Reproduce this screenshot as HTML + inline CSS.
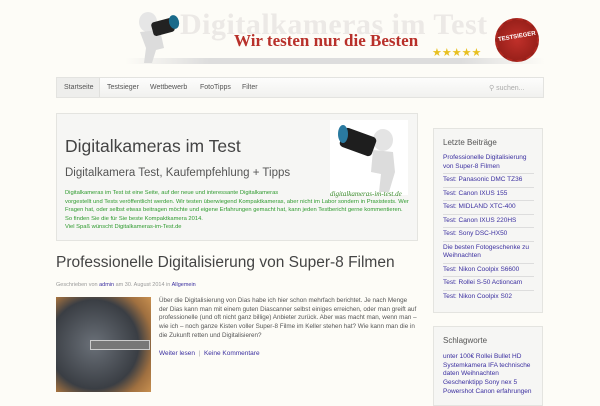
<!DOCTYPE html>
<html><head><meta charset="utf-8"><style>
*{margin:0;padding:0;box-sizing:border-box}
body{width:600px;height:400px;overflow:hidden;background:#fdfcf7;font-family:"Liberation Sans","DejaVu Sans",sans-serif;position:relative}
.a{position:absolute}
a{color:#3b2fa0;text-decoration:none}
.nav{left:56px;top:77px;width:488px;height:21px;background:linear-gradient(#fdfdfc,#f1f1ef);border:1px solid #e3e3e0;font-size:7px;color:#555}
.nav span{position:absolute;top:6px}
.box{background:#f6f6f4;border:1px solid #e4e4e0}
.side a{display:block;font-size:6.5px;line-height:8.5px;padding:2px 0;border-bottom:1px solid #ddd}
</style></head><body>
<!-- header -->
<div class="a" style="left:125px;top:58px;width:420px;height:6px;background:linear-gradient(90deg,#fdfcf7,#ddd 20%,#ddd 80%,#fdfcf7)"></div>
<svg class="a" style="left:130px;top:8px" width="60" height="56"><ellipse cx="18" cy="14" rx="9" ry="10" fill="#e6e6e6"/><path d="M10 24 L30 22 L34 40 L26 42 L22 55 L14 55 L16 40 Z" fill="#dcdcdc"/><rect x="22" y="12" width="22" height="14" rx="3" fill="#222" transform="rotate(-15 33 19)"/><ellipse cx="44" cy="14" rx="5" ry="7" fill="#1a6a8a" transform="rotate(-15 44 14)"/></svg>
<div class="a" style="left:180px;top:8px;font-family:'Liberation Serif',serif;font-size:30px;font-weight:bold;color:#ece9e6;letter-spacing:0.5px">Digitalkameras im Test</div>
<div class="a" style="left:234px;top:31px;font-family:'Liberation Serif',serif;font-size:17px;font-weight:bold;color:#b8302a">Wir testen nur die Besten</div>
<div class="a" style="left:432px;top:46px;font-size:11px;color:#e8c020;letter-spacing:0">★★★★★</div>
<div class="a" style="left:495px;top:18px;width:44px;height:44px;border-radius:50%;background:radial-gradient(#c0302a,#8a1a14);border:2px dashed #b02820"></div>
<div class="a" style="left:496px;top:34px;width:42px;font-size:6px;font-weight:bold;color:#fff;text-align:center;transform:rotate(-10deg)">TESTSIEGER</div>
<!-- nav -->
<div class="a nav">
<div class="a" style="left:0;top:0;width:43px;height:19px;background:#eeeeec;border-right:1px solid #e0e0dd"></div>
<span style="left:7px">Startseite</span><span style="left:50px">Testsieger</span><span style="left:93px">Wettbewerb</span><span style="left:143px">FotoTipps</span><span style="left:185px">Filter</span>
<span style="left:432px;color:#aaa">⚲ suchen...</span>
</div>
<!-- intro box -->
<div class="a box" style="left:56px;top:113px;width:362px;height:128px"></div>
<div class="a" style="left:65px;top:136px;font-size:17.5px;color:#444">Digitalkameras im Test</div>
<div class="a" style="left:65px;top:167px;font-size:11.5px;color:#555">Digitalkamera Test, Kaufempfehlung + Tipps</div>
<div class="a" style="left:330px;top:120px;width:78px;height:75px;background:#fff"></div>
<svg class="a" style="left:335px;top:122px" width="70" height="72"><ellipse cx="48" cy="18" rx="10" ry="11" fill="#e4e4e4"/><path d="M38 28 L58 30 L60 50 L54 70 L44 70 L46 52 L36 50 Z" fill="#dcdcdc"/><rect x="6" y="10" width="34" height="20" rx="4" fill="#1e1e1e" transform="rotate(20 23 20)"/><ellipse cx="8" cy="12" rx="5" ry="9" fill="#2a7aa0"/></svg>
<div class="a" style="left:330px;top:190px;font-family:'Liberation Serif',serif;font-style:italic;font-size:7px;color:#3a8a2a">digitalkameras-im-test.de</div>
<div class="a" style="left:65px;top:189px;width:345px;font-size:5.8px;line-height:8.5px;color:#2e9a2e">Digitalkameras im Test ist eine Seite, auf der neue und interessante Digitalkameras<br>vorgestellt und Tests veröffentlicht werden. Wir testen überwiegend Kompaktkameras, aber nicht im Labor sondern in Praxistests. Wer Fragen hat, oder selbst etwas beitragen möchte und eigene Erfahrungen gemacht hat, kann jeden Testbericht gerne kommentieren. So finden Sie die für Sie beste Kompaktkamera 2014.<br>Viel Spaß wünscht Digitalkameras-im-Test.de</div>
<!-- post -->
<div class="a" style="left:56px;top:254px;font-size:15.5px;color:#444">Professionelle Digitalisierung von Super-8 Filmen</div>
<div class="a" style="left:56px;top:282px;font-size:5.5px;color:#999">Geschrieben von <a>admin</a> am 30. August 2014 in <a>Allgemein</a></div>
<div class="a" style="left:56px;top:297px;width:95px;height:95px;background:radial-gradient(circle at 40% 50%,#6a7078,#3a3e44 60%,#a07040 80%,#c89050)"></div>
<div class="a" style="left:90px;top:340px;width:60px;height:10px;background:#777;border:1px solid #ccc"></div>
<div class="a" style="left:159px;top:297px;width:258px;font-size:6.3px;line-height:8.7px;color:#555">Über die Digitalisierung von Dias habe ich hier schon mehrfach berichtet. Je nach Menge der Dias kann man mit einem guten Diascanner selbst einiges erreichen, oder man greift auf professionelle (und oft nicht ganz billige) Anbieter zurück. Aber was macht man, wenn man – wie ich – noch ganze Kisten voller Super-8 Filme im Keller stehen hat? Wie kann man die in die Zukunft retten und Digitalisieren?</div>
<div class="a" style="left:159px;top:350px;font-size:6.5px;color:#aaa"><a>Weiter lesen</a> &nbsp;|&nbsp; <a>Keine Kommentare</a></div>
<!-- sidebar -->
<div class="a box" style="left:433px;top:128px;width:110px;height:185px;padding:9px 8px 0 9px">
<div style="font-size:8px;color:#555;margin-bottom:5px">Letzte Beiträge</div>
<div class="side"><a>Professionelle Digitalisierung von Super-8 Filmen</a><a>Test: Panasonic DMC TZ36</a><a>Test: Canon IXUS 155</a><a>Test: MIDLAND XTC-400</a><a>Test: Canon IXUS 220HS</a><a>Test: Sony DSC-HX50</a><a>Die besten Fotogeschenke zu Weihnachten</a><a>Test: Nikon Coolpix S6600</a><a>Test: Rollei S-50 Actioncam</a><a style="border:0">Test: Nikon Coolpix S02</a></div>
</div>
<div class="a box" style="left:433px;top:326px;width:110px;height:80px;padding:9px 8px 0 9px">
<div style="font-size:8px;color:#555;margin-bottom:8px">Schlagworte</div>
<div style="font-size:6.5px;line-height:8.7px;color:#3b2fa0">unter 100€ Rollei Bullet HD Systemkamera IFA technische daten Weihnachten Geschenktipp Sony nex 5 Powershot Canon erfahrungen</div>
</div>
</body></html>
